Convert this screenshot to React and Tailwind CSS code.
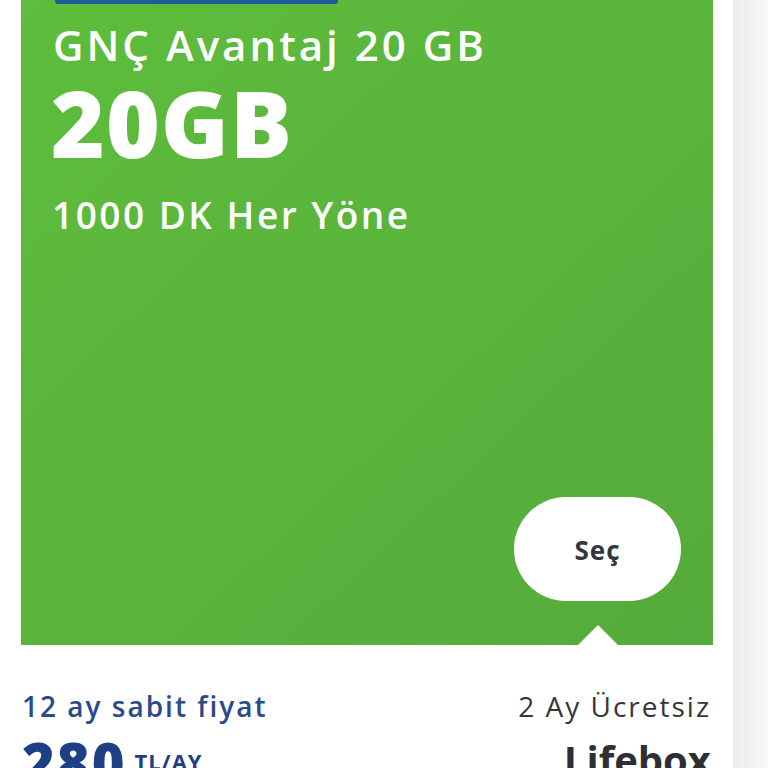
export default function App() {
  return (
    <div className="w-[768px] h-[768px] overflow-hidden bg-white flex" style={{ fontFamily: "'Open Sans', 'Noto Sans', sans-serif" }}>
      <div className="w-[21px] shrink-0" />
      <div className="w-[692px] shrink-0 flex flex-col">
        <div className="relative h-[645px] shrink-0 bg-gradient-to-br from-[#5ebd3c] to-[#55ab3b] flex flex-col">
          <div className="ml-[34px] w-[283px] h-[4px] bg-[#1f5d96] rounded-b-[3px]" />
          <div className="ml-[32px] mt-[17px] text-white text-[42px] leading-[48px] font-semibold tracking-[3px]">GNÇ Avantaj 20 GB</div>
          <div className="ml-[30px] mt-[8px] text-white text-[92px] leading-[92px] font-extrabold tracking-[1px]">20GB</div>
          <div className="ml-[31px] mt-[24px] text-white text-[37px] leading-[44px] font-semibold tracking-[2.5px]">1000 DK Her Yöne</div>
          <div className="mt-auto flex justify-end pr-[32px] pb-[44px]">
            <div className="w-[167px] h-[104px] rounded-full bg-white flex items-center justify-center text-[#33363d] text-[26px] font-bold tracking-[1px] pt-[2px]">Seç</div>
          </div>
          <div className="absolute bottom-0 left-[557px] w-0 h-0 border-l-[20px] border-r-[20px] border-b-[20px] border-l-transparent border-r-transparent border-b-white" />
        </div>
        <div className="flex justify-between items-start pt-[43px] pl-[1px] pr-[2px]">
          <div className="flex flex-col">
            <div className="text-[#2a4a8c] text-[28px] leading-[36px] font-semibold tracking-[2px]">12 ay sabit fiyat</div>
            <div className="flex items-start mt-[10px]">
              <span className="text-[#1e3f86] text-[56px] leading-[56px] font-extrabold tracking-[2px]">280</span>
              <span className="ml-[8px] mt-[16px] text-[#1e3f86] text-[22px] leading-[22px] font-bold tracking-[1px]">TL/AY</span>
            </div>
          </div>
          <div className="flex flex-col items-end">
            <div className="text-[#33363d] text-[28px] leading-[36px] tracking-[2px]">2 Ay Ücretsiz</div>
            <div className="mt-[11px] text-[#2d2f33] text-[40px] leading-[50px] font-bold">Lifebox</div>
          </div>
        </div>
      </div>
      <div className="w-[20px] shrink-0" />
      <div className="flex-1 bg-gradient-to-r from-[#ececec] to-[#f7f7f7]" />
    </div>
  );
}
